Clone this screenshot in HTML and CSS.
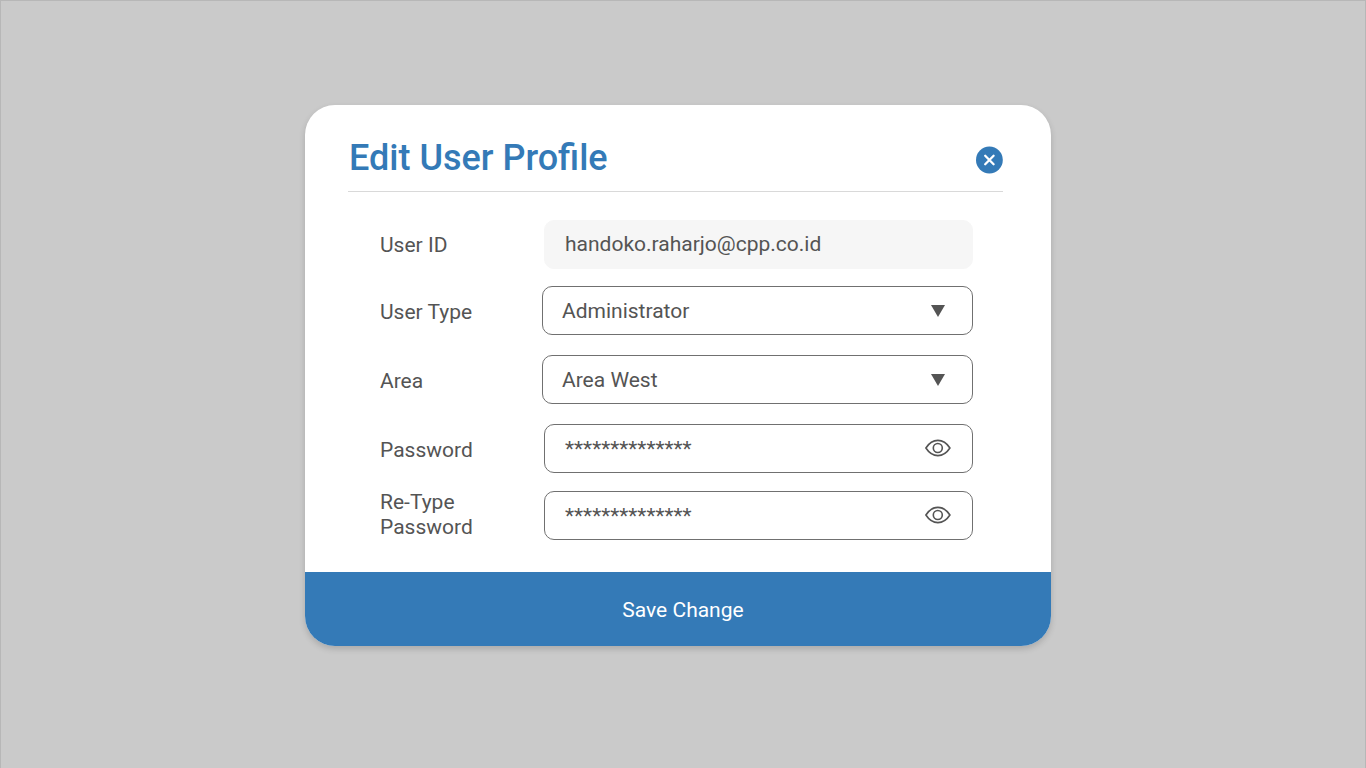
FILE: index.html
```html
<!DOCTYPE html>
<html lang="en">
<head>
<meta charset="utf-8">
<title>Edit User Profile</title>
<link rel="stylesheet" href="styles.css">
</head>
<body>
<main class="backdrop">
  <form class="dialog">
    <div class="content">
      <header class="header">
        <h1 class="title">Edit User Profile</h1>
        <svg class="close" viewBox="0 0 28 28" role="img" aria-label="Close">
          <circle cx="14.400" cy="14" r="13.400"/>
          <path d="M10.200 9.800l8.400 8.400M18.600 9.800l-8.400 8.400"/>
        </svg>
      </header>
      <div class="fields">
        <div class="row">
          <span class="label">User ID</span>
          <div class="field readonly">handoko.raharjo@cpp.co.id</div>
        </div>
        <div class="row type-row">
          <span class="label lowered">User Type</span>
          <div class="field select"><span class="value">Administrator</span>
            <svg class="arrow" viewBox="0 0 14 12"><path d="M0 0h14L7 12z"/></svg>
          </div>
        </div>
        <div class="row area-row">
          <span class="label lowered">Area</span>
          <div class="field select"><span class="value">Area West</span>
            <svg class="arrow" viewBox="0 0 14 12"><path d="M0 0h14L7 12z"/></svg>
          </div>
        </div>
        <div class="row password-row">
          <span class="label lowered">Password</span>
          <div class="field"><span class="value">**************</span>
            <svg class="eye" viewBox="0 0 26 18"><path d="M.9 9C4 4.200 8 1.400 12.900 1.400S21.800 4.200 24.900 9C21.800 13.800 17.800 16.600 12.900 16.600S4 13.800 .9 9z"/><circle cx="12.800" cy="9" r="4.500"/></svg>
          </div>
        </div>
        <div class="row retype-row">
          <span class="label two-line">Re-Type<br>Password</span>
          <div class="field"><span class="value">**************</span>
            <svg class="eye" viewBox="0 0 26 18"><path d="M.9 9C4 4.200 8 1.400 12.900 1.400S21.800 4.200 24.900 9C21.800 13.800 17.800 16.600 12.900 16.600S4 13.800 .9 9z"/><circle cx="12.800" cy="9" r="4.500"/></svg>
          </div>
        </div>
      </div>
    </div>
    <button class="save" type="button">Save Change</button>
  </form>
</main>
</body>
</html>
```
FILE: styles.css
```css
* {
  box-sizing: border-box;
}

body {
  margin: 0;
  font-family: Roboto, "Liberation Sans", sans-serif;
}

.backdrop {
  display: flex;
  flex-direction: column;
  height: 768px;
  padding: 104px 0 0 304px;
  background: #cacaca;
  border: 1px solid #b7b7b7;
  border-bottom: 0;
}

.dialog {
  display: flex;
  flex-direction: column;
  width: 746px;
  height: 541px;
  overflow: hidden;
  background: #fff;
  border-radius: 30px;
  box-shadow: 0 3px 6px rgba(0, 0, 0, 0.16);
}

.content {
  flex: 1;
  padding: 0 48px 0 43px;
}

.header {
  display: flex;
  align-items: center;
  justify-content: space-between;
  height: 87px;
  padding-top: 20px;
  border-bottom: 1px solid #d9d9d9;
}

.title {
  margin: 0 0 0 1px;
  color: #347ab7;
  font-size: 36px;
  font-weight: 500;
  line-height: 42px;
}

.close {
  width: 28px;
  height: 28px;
  margin-top: 3px;
  fill: #347ab7;
}

.close path {
  stroke: #fff;
  stroke-width: 2.300;
  stroke-linecap: round;
}

.fields {
  padding: 28px 30px 0 32px;
}

.row {
  display: flex;
  justify-content: space-between;
}

.type-row {
  margin-top: 17px;
}

.area-row,
.password-row {
  margin-top: 20px;
}

.retype-row {
  margin-top: 18px;
}

.label,
.field {
  color: #545454;
  font-size: 21px;
  line-height: 25px;
}

.label {
  padding-top: 13px;
}

.lowered {
  padding-top: 14px;
}

.two-line {
  padding-top: 0;
  margin-top: -1px;
}

.field {
  display: flex;
  align-items: center;
  justify-content: space-between;
  width: 429px;
  height: 49px;
  padding: 0 21px 1px 20px;
  border: 1px solid #707070;
  border-radius: 10px;
}

.value {
  padding-top: 2px;
}

.readonly {
  background: #f6f6f6;
  border-color: #f6f6f6;
}

.select {
  width: 431px;
  padding: 0 27px 0 19px;
}

.arrow {
  width: 14px;
  height: 12px;
  fill: #545454;
}

.eye {
  width: 26px;
  height: 18px;
  fill: none;
  stroke: #545454;
  stroke-width: 1.600;
}

.save {
  height: 74px;
  padding: 1px 0 0 10px;
  border: 0;
  background: #347ab7;
  color: #fff;
  font-family: inherit;
  font-size: 21px;
}
```
